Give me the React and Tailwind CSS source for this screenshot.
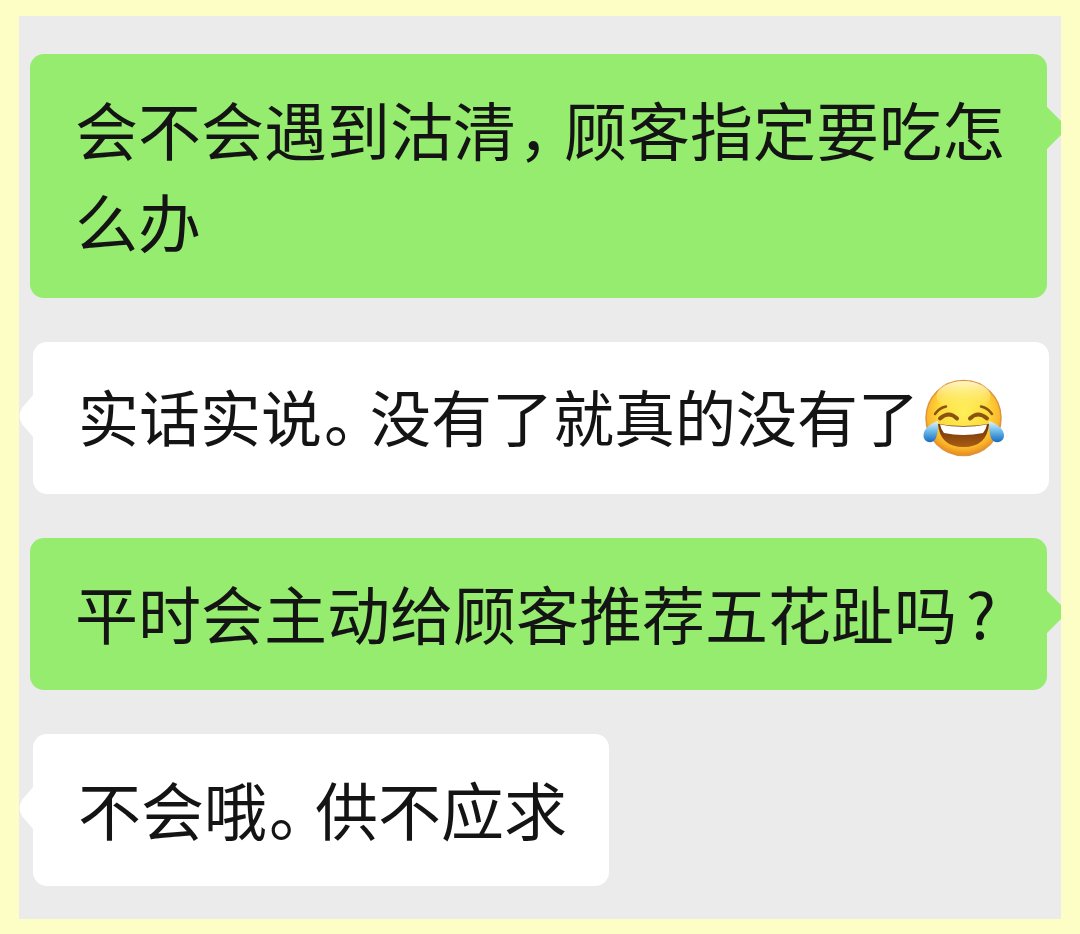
function JoyEmoji() {
  return (
    <svg
      role="img"
      aria-label="笑哭"
      viewBox="0 -4 82 84"
      className="ml-1 h-[84px] w-[82px] shrink-0"
    >
      <defs>
        <radialGradient id="face" cx="0.5" cy="0.42" r="0.58">
          <stop offset="0" stopColor="#fff05a" />
          <stop offset="0.55" stopColor="#fddc3c" />
          <stop offset="0.84" stopColor="#fbb52a" />
          <stop offset="1" stopColor="#e58a1e" />
        </radialGradient>
        <linearGradient id="shine" x1="0" y1="0" x2="0" y2="1">
          <stop offset="0" stopColor="#fffbd8" stopOpacity="0.9" />
          <stop offset="1" stopColor="#fff05a" stopOpacity="0" />
        </linearGradient>
        <linearGradient id="mouth" x1="0" y1="0" x2="0" y2="1">
          <stop offset="0" stopColor="#6e2f08" />
          <stop offset="1" stopColor="#a85d14" />
        </linearGradient>
        <linearGradient id="tear" x1="0" y1="0" x2="0" y2="1">
          <stop offset="0" stopColor="#e4f5fc" />
          <stop offset="0.45" stopColor="#72bdea" />
          <stop offset="1" stopColor="#176cc0" />
        </linearGradient>
      </defs>
      <circle cx="40.5" cy="40" r="37.500" fill="url(#face)" stroke="#dc9440" strokeWidth="1.500" />
      <ellipse cx="40.5" cy="18" rx="27" ry="15" fill="url(#shine)" />
      <g fill="none" stroke="#8a5410" strokeLinecap="round">
        <path d="M12 36Q16 30 23 28.500" strokeWidth="2.500" />
        <path d="M69 36Q65 30 58 28.500" strokeWidth="2.500" />
        <path d="M17 40.500Q26 32.500 34 40.500" strokeWidth="4" />
        <path d="M47 40.500Q55 32.500 64 40.500" strokeWidth="4" />
      </g>
      <path d="M15 46Q40 50 66 46Q64 69 40.500 69Q17 69 15 46Z" fill="url(#mouth)" />
      <path d="M17 46.500Q40 51 64 46.500Q63 52 60 55Q40 59 21 55Q18 52 17 46.500Z" fill="#fff" />
      <path d="M15 43C8 45 0 51 0.500 58C1 65 10 66.500 13 60C15 55 15 48 15 43Z" fill="url(#tear)" />
      <path d="M66 43C73 45 81.500 51 81 58C80.500 65 71 66.500 68 60C66 55 66 48 66 43Z" fill="url(#tear)" />
    </svg>
  );
}

function Mark({ children, className = "pl-0.5" }) {
  return (
    <span className={`inline-block w-12 [font-feature-settings:'halt'] ${className}`}>{children}</span>
  );
}

function Sent({ children }) {
  return (
    <li className="relative mr-[14px] ml-[11px] rounded-[14px] bg-[#95ec6e] pt-7 pr-10 pb-8 pl-[45px]">
      <p className="text-[63px] leading-[92px]">{children}</p>
      <svg viewBox="0 0 14 42" className="absolute top-[53px] left-full h-[42px] w-[14px] text-[#95ec6e]" aria-hidden="true">
        <path d="M0 0L14 14V28L0 42Z" fill="currentColor" />
      </svg>
    </li>
  );
}

function Received({ children, className }) {
  return (
    <li className={`relative mr-3 ml-[14px] rounded-[14px] bg-white pt-7 pr-[42px] pb-8 pl-[45px] ${className}`}>
      {children}
      <svg viewBox="0 0 14 42" className="absolute top-[53px] right-full h-[42px] w-[14px] text-white" aria-hidden="true">
        <path d="M14 0L3 13Q-2 21 3 29L14 42Z" fill="currentColor" />
      </svg>
    </li>
  );
}

export default function App() {
  return (
    <main className="min-h-screen bg-[#fdfec5] px-[19px] py-4 font-['Noto_Sans_CJK_SC',sans-serif] text-[#141414]">
      <ul className="flex flex-col gap-11 overflow-hidden bg-[#ebebeb] pt-[38px] pb-[33px]">
        <Sent>
          会不会遇到沽清<Mark>，</Mark>顾客指定要吃怎么办
        </Sent>
        <Received className="flex items-center">
          <p className="text-[61px] leading-[92px]">
            实话实说<Mark>。</Mark>没有了就真的没有了
          </p>
          <JoyEmoji />
        </Received>
        <Sent>
          平时会主动给顾客推荐五花趾吗<Mark className="text-center">?</Mark>
        </Sent>
        <Received className="w-fit">
          <p className="text-[63px] leading-[92px]">
            不会哦<Mark>。</Mark>供不应求
          </p>
        </Received>
      </ul>
    </main>
  );
}
